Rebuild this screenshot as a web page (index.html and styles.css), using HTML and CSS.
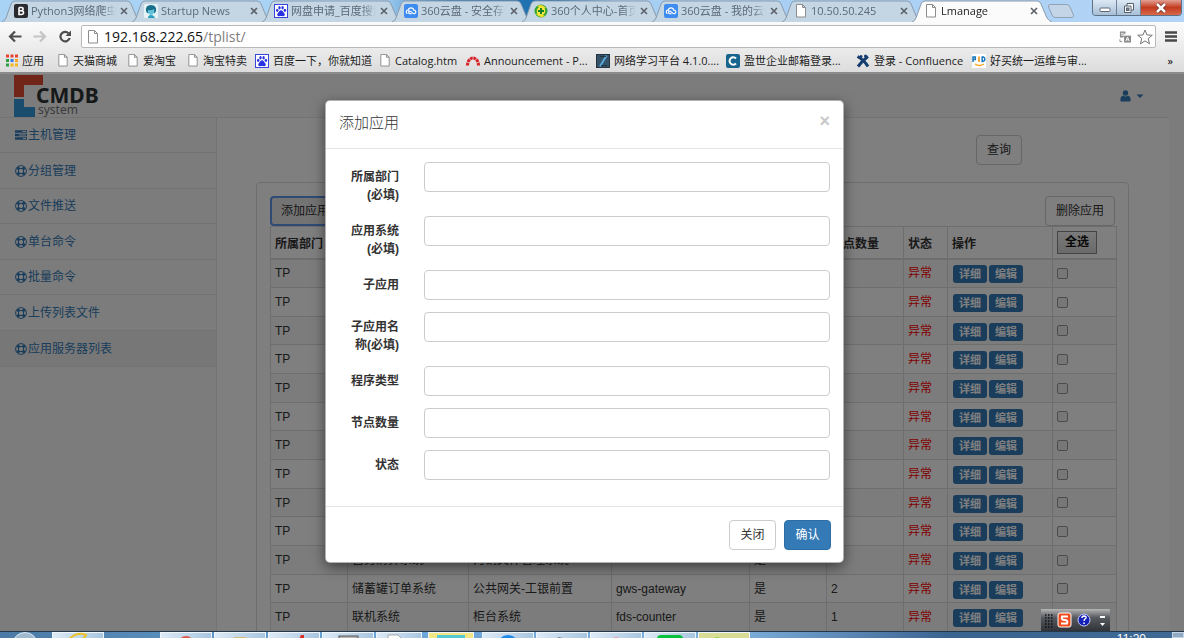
FILE: index.html
```html
<!DOCTYPE html>
<html lang="zh-CN">
<head>
<meta charset="utf-8">
<title>Lmanage</title>
<link rel="stylesheet" href="styles.css">
</head>
<body>
<svg class="defs" aria-hidden="true">
  <symbol id="tab" viewBox="0 0 140 22" preserveAspectRatio="none"><path d="M0 22 Q3 21 4 18 L9 4 Q10 1 13 1 H125 Q128 1 129 4 L135 18 Q137 21 140 22"/></symbol>
  <symbol id="doc" viewBox="0 0 12 14"><path d="M1.500 .5H7.500L10.500 3.500V13H1.500Z M7.500 .5V3.500H10.500" fill="#fff" stroke="#8d8d8d"/></symbol>
  <symbol id="x" viewBox="0 0 8 8"><path d="M1 1L7 7M7 1L1 7" stroke="#5a6169" stroke-width="1.600"/></symbol>
  <symbol id="baidu" viewBox="0 0 14 14"><rect x=".5" y=".5" width="13" height="13" fill="#fff" stroke="#3845dc"/><g fill="#2932e1"><ellipse cx="3.200" cy="6.300" rx="1.200" ry="1.600"/><ellipse cx="5.500" cy="3.800" rx="1.200" ry="1.700"/><ellipse cx="8.600" cy="3.800" rx="1.200" ry="1.700"/><ellipse cx="10.900" cy="6.300" rx="1.200" ry="1.600"/><path d="M7 6.300C8.500 6.300 9 8 10.300 9.300C11.500 11 10.500 12.300 9 12.200C7.500 11.900 6.500 11.900 5 12.200C3.500 12.300 2.500 11 3.700 9.300C5 8 5.500 6.300 7 6.300Z"/></g></symbol>
  <symbol id="cloud" viewBox="0 0 14 14"><rect width="14" height="14" rx="2" fill="#3f8cf0"/><path d="M3.500 9.500C1.500 9 2 5.800 4.200 6.200C5 3 9 3 9.800 6.200C12.300 6 12.500 9.700 10 9.700C8.500 9.700 7.500 7 5.500 7.200C4 7.600 4.500 9.700 6 9.700H7.500" fill="none" stroke="#fff" stroke-width="1.200"/></symbol>
  <symbol id="ring" viewBox="0 0 12 12"><circle cx="6" cy="6" r="5.400" fill="none" stroke="currentColor"/><circle cx="6" cy="6" r="2.700" fill="none" stroke="currentColor"/><path d="M2.200 2.200L4.200 4.200M9.800 2.200L7.800 4.200M2.200 9.800L4.200 7.800M9.800 9.800L7.800 7.800" stroke="currentColor" stroke-width="2.800"/></symbol>
</svg>

<header class="browser">
  <div class="tabstrip">
    <div class="tab"><svg class="tab-shape"><use href="#tab"/></svg>
      <svg class="fav" viewBox="0 0 14 14"><rect width="14" height="14" rx="2" fill="#2b2b2f"/><path d="M5 3.500H7.500Q9.500 3.700 9 5.500Q8.700 6.700 7.500 6.800H5M7.500 6.800Q9.900 7 9.500 9Q9.200 10.500 7.500 10.500H5V3.500" fill="none" stroke="#fff" stroke-width="1.600"/></svg>
      <span class="tab-title">Python3网络爬虫</span><button class="tab-x" aria-label="关闭标签"><svg><use href="#x"/></svg></button></div>
    <div class="tab"><svg class="tab-shape"><use href="#tab"/></svg>
      <svg class="fav" viewBox="0 0 14 14"><rect width="14" height="14" rx="1" fill="#e4f1f5"/><path d="M2 7Q1 1.500 7 1Q13 1.500 12 7L11 9H3Z" fill="#186f8c"/><path d="M4 6Q7 7 10 5Q11.500 10 7 11Q3 10 4 6" fill="#62c2d8"/><path d="M4 14Q4 11 7 11Q10 11 11 14Z" fill="#2b9fc0"/></svg>
      <span class="tab-title">Startup News</span><button class="tab-x" aria-label="关闭标签"><svg><use href="#x"/></svg></button></div>
    <div class="tab"><svg class="tab-shape"><use href="#tab"/></svg><svg class="fav"><use href="#baidu"/></svg>
      <span class="tab-title">网盘申请_百度搜索</span><button class="tab-x" aria-label="关闭标签"><svg><use href="#x"/></svg></button></div>
    <div class="tab"><svg class="tab-shape"><use href="#tab"/></svg><svg class="fav"><use href="#cloud"/></svg>
      <span class="tab-title">360云盘 - 安全存储</span><button class="tab-x" aria-label="关闭标签"><svg><use href="#x"/></svg></button></div>
    <div class="tab"><svg class="tab-shape"><use href="#tab"/></svg>
      <svg class="fav" viewBox="0 0 14 14"><circle cx="7" cy="7" r="6.500" fill="#31a531"/><path d="M3 2Q8 -1 12 4Q9 6 3 2M2 10Q4 8 11 12Q6 15 2 10" fill="#e9df28"/><circle cx="7" cy="7" r="4.300" fill="#f6e742"/><path d="M7 4V10M4 7H10" stroke="#168028" stroke-width="2"/></svg>
      <span class="tab-title">360个人中心-首页</span><button class="tab-x" aria-label="关闭标签"><svg><use href="#x"/></svg></button></div>
    <div class="tab"><svg class="tab-shape"><use href="#tab"/></svg><svg class="fav"><use href="#cloud"/></svg>
      <span class="tab-title">360云盘 - 我的云盘</span><button class="tab-x" aria-label="关闭标签"><svg><use href="#x"/></svg></button></div>
    <div class="tab"><svg class="tab-shape"><use href="#tab"/></svg><svg class="fav"><use href="#doc"/></svg>
      <span class="tab-title">10.50.50.245</span><button class="tab-x" aria-label="关闭标签"><svg><use href="#x"/></svg></button></div>
    <div class="tab active"><svg class="tab-shape"><use href="#tab"/></svg><svg class="fav"><use href="#doc"/></svg>
      <span class="tab-title">Lmanage</span><button class="tab-x" aria-label="关闭标签"><svg><use href="#x"/></svg></button></div>
    <button class="newtab" aria-label="新标签页"><svg viewBox="0 0 28 14"><path d="M3 .5H20Q22 .5 23 3L26.500 11Q27 13 25 13.500H8Q6 13.500 5 11L1.500 3Q1 .5 3 .5Z" fill="#c3d5e6" stroke="#8fa3b8"/></svg></button>
    <div class="winbtns">
      <button aria-label="最小化"><svg viewBox="0 0 12 12"><rect x="1" y="6" width="10" height="3.500" rx="1" fill="#fff" stroke="#5e6a78"/></svg></button>
      <button aria-label="还原"><svg viewBox="0 0 12 12"><path d="M4 1.500H10.500V8H4Z" fill="#fff" stroke="#56606c"/><path d="M1.500 4H8V10.500H1.500Z" fill="#fff" stroke="#56606c"/><rect x="3.500" y="6" width="2.500" height="2.500" fill="#7c8fa5" stroke="#56606c"/></svg></button>
      <button class="win-close" aria-label="关闭"><svg viewBox="0 0 12 12"><path d="M2 2L10 10M10 2L2 10" stroke="#6b2b24" stroke-width="4"/><path d="M2 2L10 10M10 2L2 10" stroke="#fff" stroke-width="2.500"/></svg></button>
    </div>
  </div>

  <div class="toolbar">
    <button class="nav" aria-label="后退"><svg viewBox="0 0 14 12"><path d="M13.500 6H2M7 1L2 6L7 11" fill="none" stroke="#4c4c4c" stroke-width="2.200"/></svg></button>
    <button class="nav" aria-label="前进"><svg viewBox="0 0 14 12"><path d="M.5 6H12M7 1L12 6L7 11" fill="none" stroke="#c4c4c4" stroke-width="2.200"/></svg></button>
    <button class="nav" aria-label="刷新"><svg viewBox="0 0 14 12"><path d="M10.500 2.800A4.700 4.700 0 1 0 11.700 7.500" fill="none" stroke="#4c4c4c" stroke-width="2.200"/><path d="M13 0V5.500H7.500Z" fill="#4c4c4c"/></svg></button>
    <div class="address">
      <svg class="page-icon"><use href="#doc"/></svg>
      <span class="url">192.168.222.65<span>/tplist/</span></span>
      <svg class="translate" viewBox="0 0 13 13"><path d="M1 .5H7V3H5V7H1Z" fill="#888"/><path d="M2 2.500H5M2 4.500H5" stroke="#fff"/><rect x="5.500" y="5" width="7.500" height="7.500" fill="#888"/><path d="M7.500 11L9.200 6.500L11 11M8 9.500H10.500" fill="none" stroke="#fff"/><path d="M1 9V11.500H3.500" fill="none" stroke="#888"/></svg>
      <svg class="star" viewBox="0 0 16 16"><path d="M8 1L10 6L15.300 6.200L11.200 9.600L12.600 14.800L8 11.900L3.400 14.800L4.800 9.600L.7 6.200L6 6Z" fill="#fff" stroke="#777"/></svg>
    </div>
    <button class="nav menu" aria-label="菜单"><svg viewBox="0 0 12 12"><path d="M0 2H12M0 6H12M0 10H12" stroke="#484848" stroke-width="2.400"/></svg></button>
  </div>

  <nav class="bookmarks">
    <a href="#"><svg class="bm" viewBox="0 0 12 12"><path d="M0 1.500H12" stroke="#e8432f" stroke-width="3" stroke-dasharray="3 1.500"/><path d="M0 6H3" stroke="#2a9d46" stroke-width="3"/><path d="M4.500 6H7.500" stroke="#3b78e7" stroke-width="3"/><path d="M9 6H12" stroke="#f5a81c" stroke-width="3"/><path d="M0 10.500H3" stroke="#2a9d46" stroke-width="3"/><path d="M4.500 10.500H12" stroke="#f5b81c" stroke-width="3" stroke-dasharray="3 1.500"/></svg>应用</a>
    <a href="#"><svg class="bm"><use href="#doc"/></svg>天猫商城</a>
    <a href="#"><svg class="bm"><use href="#doc"/></svg>爱淘宝</a>
    <a href="#"><svg class="bm"><use href="#doc"/></svg>淘宝特卖</a>
    <a href="#"><svg class="bm wide"><use href="#baidu"/></svg>百度一下，你就知道</a>
    <a href="#"><svg class="bm"><use href="#doc"/></svg>Catalog.htm</a>
    <a href="#"><svg class="bm wide" viewBox="0 0 14 14"><path d="M1.500 11.500A5.500 7.500 0 0 1 12.500 11.500" fill="none" stroke="#d81f26" stroke-width="3" stroke-dasharray="2.800 .7"/></svg>Announcement - P...</a>
    <a href="#"><svg class="bm wide" viewBox="0 0 14 14"><rect width="14" height="14" fill="#26323e"/><path d="M1 1H13V13H1Z" fill="#34536b"/><path d="M10.500 1.500L4 12.500" fill="none" stroke="#58a7d8" stroke-width="2"/><path d="M4 2.500H10M5 11.500H11" stroke="#22323f"/></svg>网络学习平台 4.1.0....</a>
    <a href="#"><svg class="bm wide" viewBox="0 0 14 14"><rect width="14" height="14" rx="2" fill="#17658d"/><path d="M10 4.500A3.700 3.700 0 1 0 10 9.500" fill="none" stroke="#fff" stroke-width="2"/></svg>盈世企业邮箱登录...</a>
    <a href="#"><svg class="bm wide" viewBox="0 0 14 14"><path d="M1.500 2.500Q8 6 12 12.500M12 2.500Q7 6 2 12.500" fill="none" stroke="#143c6e" stroke-width="3"/><circle cx="5" cy="2.500" r="1.500" fill="#143c6e"/><circle cx="9.500" cy="2" r="1.500" fill="#143c6e"/></svg>登录 - Confluence</a>
    <a href="#"><svg class="bm wide" viewBox="0 0 14 14"><rect width="14" height="14" fill="#fff"/><path d="M1 8V3H3.300V5.500H1" fill="none" stroke="#1677bd" stroke-width="1.500"/><path d="M7 2.500V8" stroke="#f39c1e" stroke-width="1.700"/><path d="M10.200 3H11.500Q13 3.500 12.800 5.500Q12.500 7.500 10.200 7.500Z" fill="none" stroke="#1677bd" stroke-width="1.500"/><path d="M3 10Q7 13 12 10" fill="none" stroke="#f5a623" stroke-width="1.300"/></svg>好买统一运维与审...</a>
    <button class="more" aria-label="更多书签">»</button>
  </nav>
</header>

<div class="viewport">
  <div class="page">
    <header class="site-head">
      <svg class="logo" viewBox="0 0 86 43" role="img" aria-label="CMDB system">
        <path d="M0 1H29V11H10V23H0Z" fill="#e04b30"/><path d="M0 25H10V33H21V43H0Z" fill="#3498db"/>
        <text class="logo-main" x="22" y="29">CMDB</text><text class="logo-sub" x="24" y="40">system</text>
      </svg>
      <button class="user" aria-label="用户菜单"><svg viewBox="0 0 24 12"><circle cx="5.500" cy="3" r="2.700" fill="#337ab7"/><path d="M.5 11.500V8Q1 6 3 5.500Q5.500 7.500 8 5.500Q10 6 10.500 8V11.500Z" fill="#337ab7"/><path d="M16.500 4.500H23.500L20 8Z" fill="#337ab7"/></svg></button>
    </header>
    <div class="columns">
      <nav class="sidebar">
        <a href="#"><svg class="ico" viewBox="0 0 12 12"><path d="M0 2.500H12M0 6H12M0 9.500H12" stroke="currentColor" stroke-width="2.700"/><path d="M7.500 2.500H11M4 6H11M8 9.500H11" stroke="#f8f8f8"/></svg>主机管理</a>
        <a href="#"><svg class="ico"><use href="#ring"/></svg>分组管理</a>
        <a href="#"><svg class="ico"><use href="#ring"/></svg>文件推送</a>
        <a href="#"><svg class="ico"><use href="#ring"/></svg>单台命令</a>
        <a href="#"><svg class="ico"><use href="#ring"/></svg>批量命令</a>
        <a href="#"><svg class="ico"><use href="#ring"/></svg>上传列表文件</a>
        <a href="#" class="current"><svg class="ico"><use href="#ring"/></svg>应用服务器列表</a>
      </nav>
      <main class="main">
        <div class="search"><button class="btn">查询</button></div>
        <section class="panel">
          <div class="actions"><button class="btn focused">添加应用</button><button class="btn">删除应用</button></div>
          <table class="grid">
            <colgroup><col class="c-dept"><col class="c-sys"><col class="c-sub"><col class="c-name"><col class="c-type"><col class="c-count"><col class="c-state"><col class="c-ops"><col class="c-check"></colgroup>
            <thead><tr><th>所属部门</th><th>应用系统</th><th>子应用</th><th>子应用名称</th><th>程序类型</th><th>节点数量</th><th>状态</th><th>操作</th><th><button class="all">全选</button></th></tr></thead>
            <tbody>
            <tr><td>TP</td><td></td><td></td><td></td><td></td><td></td><td class="bad">异常</td><td><a class="tag" href="#">详细</a><a class="tag" href="#">编辑</a></td><td><input type="checkbox" aria-label="选择"></td></tr>
            <tr><td>TP</td><td></td><td></td><td></td><td></td><td></td><td class="bad">异常</td><td><a class="tag" href="#">详细</a><a class="tag" href="#">编辑</a></td><td><input type="checkbox" aria-label="选择"></td></tr>
            <tr><td>TP</td><td></td><td></td><td></td><td></td><td></td><td class="bad">异常</td><td><a class="tag" href="#">详细</a><a class="tag" href="#">编辑</a></td><td><input type="checkbox" aria-label="选择"></td></tr>
            <tr><td>TP</td><td></td><td></td><td></td><td></td><td></td><td class="bad">异常</td><td><a class="tag" href="#">详细</a><a class="tag" href="#">编辑</a></td><td><input type="checkbox" aria-label="选择"></td></tr>
            <tr><td>TP</td><td></td><td></td><td></td><td></td><td></td><td class="bad">异常</td><td><a class="tag" href="#">详细</a><a class="tag" href="#">编辑</a></td><td><input type="checkbox" aria-label="选择"></td></tr>
            <tr><td>TP</td><td></td><td></td><td></td><td></td><td></td><td class="bad">异常</td><td><a class="tag" href="#">详细</a><a class="tag" href="#">编辑</a></td><td><input type="checkbox" aria-label="选择"></td></tr>
            <tr><td>TP</td><td></td><td></td><td></td><td></td><td></td><td class="bad">异常</td><td><a class="tag" href="#">详细</a><a class="tag" href="#">编辑</a></td><td><input type="checkbox" aria-label="选择"></td></tr>
            <tr><td>TP</td><td></td><td></td><td></td><td></td><td></td><td class="bad">异常</td><td><a class="tag" href="#">详细</a><a class="tag" href="#">编辑</a></td><td><input type="checkbox" aria-label="选择"></td></tr>
            <tr><td>TP</td><td></td><td></td><td></td><td></td><td></td><td class="bad">异常</td><td><a class="tag" href="#">详细</a><a class="tag" href="#">编辑</a></td><td><input type="checkbox" aria-label="选择"></td></tr>
            <tr><td>TP</td><td></td><td></td><td></td><td></td><td></td><td class="bad">异常</td><td><a class="tag" href="#">详细</a><a class="tag" href="#">编辑</a></td><td><input type="checkbox" aria-label="选择"></td></tr>
            <tr><td>TP</td><td>营务清算系统</td><td>对销文件管理系统</td><td></td><td>是</td><td></td><td class="bad">异常</td><td><a class="tag" href="#">详细</a><a class="tag" href="#">编辑</a></td><td><input type="checkbox" aria-label="选择"></td></tr>
            <tr><td>TP</td><td>储蓄罐订单系统</td><td>公共网关-工银前置</td><td>gws-gateway</td><td>是</td><td>2</td><td class="bad">异常</td><td><a class="tag" href="#">详细</a><a class="tag" href="#">编辑</a></td><td><input type="checkbox" aria-label="选择"></td></tr>
            <tr><td>TP</td><td>联机系统</td><td>柜台系统</td><td>fds-counter</td><td>是</td><td>1</td><td class="bad">异常</td><td><a class="tag" href="#">详细</a><a class="tag" href="#">编辑</a></td><td><input type="checkbox" aria-label="选择"></td></tr>
            </tbody>
          </table>
        </section>
      </main>
    </div>
  </div>

  <div class="backdrop">
    <div class="modal" role="dialog" aria-labelledby="dlg-title">
      <div class="modal-head"><h4 id="dlg-title">添加应用</h4><button class="close" aria-label="关闭">×</button></div>
      <form class="modal-body">
        <div class="field"><label for="f1">所属部门(必填)</label><input id="f1" type="text"></div>
        <div class="field"><label for="f2">应用系统(必填)</label><input id="f2" type="text"></div>
        <div class="field"><label for="f3">子应用</label><input id="f3" type="text"></div>
        <div class="field"><label for="f4">子应用名称(必填)</label><input id="f4" type="text"></div>
        <div class="field"><label for="f5">程序类型</label><input id="f5" type="text"></div>
        <div class="field"><label for="f6">节点数量</label><input id="f6" type="text"></div>
        <div class="field"><label for="f7">状态</label><input id="f7" type="text"></div>
      </form>
      <div class="modal-foot"><button class="btn">关闭</button><button class="btn primary">确认</button></div>
    </div>
  </div>

  <div class="ime">
    <svg viewBox="0 0 69 22"><path d="M4 6H12M4 9H12M4 12H12M4 15H12M4 18H12" stroke="#111" stroke-width="1.500" stroke-dasharray="1.500 1.500"/><rect x="17" y="4" width="13" height="14" rx="2" fill="#ef4a1c" stroke="#fff"/><path d="M27 7.500H21Q20 11 23.500 11Q27.500 11 26 14.500H20" fill="none" stroke="#fff" stroke-width="2"/><circle cx="43" cy="11" r="6" fill="#1420b8" stroke="#c9cff5"/><path d="M41 9Q41 7 43 7Q45.500 7.200 45 9Q43 10.500 43 12M43 13.500V15" fill="none" stroke="#fff" stroke-width="1.500"/><path d="M59 8H64" stroke="#fff" stroke-width="2"/><path d="M59 14H64L61.500 17Z" fill="#fff"/></svg>
  </div>
</div>

<footer class="taskbar">
  <span class="start"><svg viewBox="0 0 28 7"><circle cx="14" cy="14" r="12.500" fill="#9fb9cf" stroke="#dbe9f4"/></svg></span>
  <span class="task"><svg viewBox="0 0 28 7"><path d="M5 7Q14 -1 22 3Q21 6 17 7" fill="none" stroke="#eac12c" stroke-width="2"/></svg></span>
  <span class="task flat"></span>
  <span class="task"><svg viewBox="0 0 28 7"><circle cx="14" cy="12" r="8" fill="#dc5a4a"/></svg></span>
  <span class="task"><svg viewBox="0 0 28 7"><rect x="8" y="5" width="12" height="4" fill="#d8bd7a"/></svg></span>
  <span class="task"><svg viewBox="0 0 28 7"><path d="M19 7L21 3H24V7Z" fill="#d93025"/></svg></span>
  <span class="task"><svg viewBox="0 0 28 7"><rect x="5" y="4" width="19" height="6" fill="#b5b5b5" stroke="#555"/></svg></span>
  <span class="task narrow"><svg viewBox="0 0 28 7"><path d="M3 3H13L17 7H3Z" fill="#fff" stroke="#aaa"/></svg></span>
  <span class="task narrow yellow"><svg viewBox="0 0 28 7"><rect y="3" width="28" height="4" fill="#55c9d2"/></svg></span>
  <span class="task"><svg viewBox="0 0 28 7"><circle cx="14" cy="14" r="11" fill="#1d8ae6"/></svg></span>
  <span class="task"><svg viewBox="0 0 28 7"><path d="M10 5L20 7H10Z" fill="#777"/></svg></span>
  <span class="task"><svg viewBox="0 0 28 7"><circle cx="14" cy="9" r="4" fill="#e7a6a6"/></svg></span>
  <span class="task"><svg viewBox="0 0 28 7"><rect x="1" y="3" width="26" height="9" rx="4" fill="#07c23b"/></svg></span>
  <span class="task olive"><svg viewBox="0 0 28 7"><circle cx="7" cy="10" r="5" fill="#8dd63c"/></svg></span>
  <span class="clock">11:20</span>
  <span class="desk"></span>
</footer>
</body>
</html>
```
FILE: styles.css
```css
* { box-sizing: border-box; }
html, body { height: 100%; }
body {
  margin: 0;
  display: flex;
  flex-direction: column;
  overflow: hidden;
  font: 12px/18px "Liberation Sans", "Noto Sans CJK SC", sans-serif;
  color: #333;
}
button, input { font: inherit; margin: 0; }
button { cursor: pointer; }
a { text-decoration: none; }
svg { display: block; flex: none; }
.defs { position: absolute; width: 0; height: 0; }

/* browser chrome */
.browser { flex: none; font: 11px/16px "Open Sans", "Noto Sans CJK SC", sans-serif; }
.browser button { border: 0; background: none; padding: 0; }
.tabstrip {
  display: flex;
  height: 22px;
  padding-left: 2px;
  background: linear-gradient(90deg, #a9d3f5 0, #a9d3f5 32%, #2a78b8 38%, #1b6fae 47%, #a5cef3 52%, #b2d4f6 100%);
}
.tab {
  position: relative;
  display: flex;
  align-items: center;
  flex: none;
  width: 140px;
  height: 22px;
  margin-right: -10px;
  padding: 0 14px 0 12px;
  color: #5d6a76;
}
.tab-shape { position: absolute; inset: 0; width: 100%; height: 100%; fill: #c4d5e4; stroke: #8a9bad; }
.active { z-index: 1; color: #222; }
.active .tab-shape { fill: #fbfbfb; }
.fav { position: relative; width: 14px; height: 14px; margin-right: 3px; }
.tab-title {
  position: relative;
  flex: 1;
  min-width: 0;
  overflow: hidden;
  white-space: nowrap;
  margin-right: 4px;
  mask-image: linear-gradient(90deg, #000 84%, transparent);
}
.tab-x { position: relative; }
.tab-x svg { width: 8px; height: 8px; }
.newtab { margin-left: 5px; }
.newtab svg { width: 28px; height: 14px; }
.winbtns { display: flex; height: 16px; margin-left: auto; margin-right: 2px; border: 1px solid #5d7287; border-top: 0; border-radius: 0 0 4px 4px; overflow: hidden; }
.winbtns button { display: grid; place-items: center; width: 24px; background: linear-gradient(#dce8f4, #a8bfd6); border-right: 1px solid #6d8299; }
.winbtns .win-close { width: 40px; border: 0; background: linear-gradient(#e3a093, #c23b20 50%, #d9694d); }
.winbtns svg { width: 12px; height: 12px; }
.toolbar { display: flex; align-items: center; height: 27px; padding: 2px 7px 0 8px; gap: 11px; background: linear-gradient(#fbfbfb, #ebebeb); }
.nav svg { width: 14px; height: 13px; }
.menu svg { width: 12px; }
.address { flex: 1; display: flex; align-items: center; height: 23px; margin: 0 -2px; padding: 0 2px 0 5px; background: #fff; border: 1px solid #b9b9b9; border-radius: 2px; }
.page-icon { width: 12px; height: 14px; }
.url { flex: 1; margin-left: 5px; font-size: 14px; line-height: 20px; color: #111; }
.url span { color: #808080; }
.translate { width: 12px; height: 12px; margin-right: 6px; }
.star { width: 16px; height: 16px; }
.bookmarks {
  display: grid;
  grid-template-columns: 51px 70px 60px 68px 124px 87px 130px 130px 130px 116px 1fr auto;
  align-items: center;
  height: 25px;
  padding: 0 11px 0 6px;
  border-bottom: 2px solid #8c8c8c;
  background: linear-gradient(#ebebeb, #dcdcdc);
}
.bookmarks a { display: flex; align-items: center; gap: 4px; color: #1c1c1c; white-space: nowrap; }
.bm { width: 12px; height: 13px; }
.bm.wide { width: 14px; height: 14px; }

/* page */
.viewport { position: relative; flex: 1; min-height: 0; overflow: hidden; background: #f8f8f8; }
.page { height: 100%; display: flex; flex-direction: column; margin-right: 15px; }
.site-head { display: flex; flex: none; justify-content: space-between; align-items: center; height: 44px; padding: 0 25px 0 14px; border-bottom: 1px solid #e7e7e7; }
.logo { width: 86px; height: 43px; }
.logo-main { font: bold 21px "Noto Sans", sans-serif; fill: #2c3333; }
.logo-sub { font: 12px "Noto Sans", sans-serif; fill: #777; }
.user { border: 0; background: none; padding: 0; }
.user svg { width: 24px; height: 12px; }
.columns { flex: 1; min-height: 0; display: flex; }
.sidebar { flex: none; width: 216px; }
.sidebar a { display: flex; align-items: center; height: 36px; padding-left: 15px; gap: 1px; border-bottom: 1px solid #e7e7e7; color: #337ab7; }
.sidebar a:nth-child(odd) { height: 35px; }
.sidebar a.current { height: 36px; background: #eee; }
.ico { width: 12px; height: 12px; }
.main { flex: 1; min-width: 0; padding: 17px 40px 0 39px; background: #fff; border-left: 1px solid #e7e7e7; }
.search { display: flex; justify-content: flex-end; padding-right: 107px; margin-bottom: 17px; }
.btn { height: 30px; padding: 0 10px; border: 1px solid #ccc; border-radius: 4px; background: #fff; color: #333; }
.btn.focused { background: #e6e6e6; border: 2px solid #5f95e8; padding: 0 9px; }
.btn.primary { background: #337ab7; border-color: #2e6da4; color: #fff; }
.panel { padding: 13px; border: 1px solid #ddd; border-radius: 4px; }
.actions { display: flex; justify-content: space-between; }
.grid { width: 100%; table-layout: fixed; border-collapse: collapse; }
.c-dept, .c-count, .c-type { width: 77px; }
.c-sys { width: 121px; }
.c-sub { width: 143px; }
.c-name { width: 138px; }
.c-state { width: 44px; }
.c-ops { width: 105px; }
.c-check { width: 64px; }
.grid th, .grid td { border: 1px solid #ddd; padding: 0 4px; text-align: left; white-space: nowrap; overflow: hidden; }
.grid thead tr { height: 32px; }
.grid th { padding-top: 4px; border-bottom-width: 2px; }
.grid th:last-child { padding-top: 0; }
.grid tbody tr { height: 29px; }
.grid tbody tr:nth-child(3n) { height: 28px; }
.grid tbody tr:nth-child(odd) { background: #f9f9f9; }
.grid .bad { color: #f00; }
.all { display: block; width: 40px; height: 23px; padding: 0; border: 1px solid #888; background: linear-gradient(#f5f5f5, #d5d5d5); color: #111; font-weight: bold; }
.tag { display: inline-block; width: 34px; height: 18px; margin: 2px 2px 0 1px; border-radius: 3px; background: #337ab7; color: #fff; font-size: 11px; font-weight: bold; line-height: 18px; text-align: center; vertical-align: middle; }
.tag + .tag { margin-left: 0; }
.grid input { display: block; appearance: none; width: 11px; height: 11px; border: 1px solid #999; border-radius: 2px; background: #eee; }

/* dialog */
.backdrop { position: absolute; inset: 0; padding: 26px 15px 0 0; background: rgba(0, 0, 0, .5); }
.modal { max-width: 519px; margin: 0 auto; background: #fff; border: 1px solid rgba(0, 0, 0, .3); border-radius: 5px; box-shadow: 0 4px 13px rgba(0, 0, 0, .5); }
.modal-head { display: flex; justify-content: space-between; height: 48px; padding: 12px 13px; border-bottom: 1px solid #e5e5e5; }
.modal-head h4 { margin: 0; font-size: 15px; font-weight: 300; line-height: 20px; }
.close { border: 0; background: none; padding: 0; height: 16px; font-size: 18px; font-weight: bold; line-height: 16px; color: #c8c8c8; }
.modal-body { display: flex; flex-direction: column; gap: 12px; padding: 13px 13px 26px; }
.field { display: grid; grid-template-columns: 60px 1fr; column-gap: 25px; align-items: start; }
.field label { padding: 6px 0 0 6px; font-weight: bold; text-align: right; }
.field input { width: 100%; height: 30px; padding: 0 10px; border: 1px solid #ccc; border-radius: 4px; background: #fff; }
.modal-foot { display: flex; justify-content: flex-end; gap: 8px; padding: 13px 12px 12px; border-top: 1px solid #e5e5e5; }
.modal-foot .btn { width: 47px; }

/* input method bar and taskbar */
.ime { position: absolute; right: 74px; bottom: 0; width: 69px; height: 22px; background: linear-gradient(#b5b5b5, #55585c 40%, #303338); }
.taskbar { flex: none; display: flex; gap: 2px; height: 7px; overflow: hidden; border-top: 1px solid #24384c; background: linear-gradient(90deg, #4a7aa5, #6aa3d6 30%, #7fb0dc 62%, #3a6390 80%, #3f6a96); }
.start { width: 50px; }
.task { width: 52px; background: linear-gradient(90deg, #dceaf6, #a9c6e0); border: 1px solid #eef6fc; border-bottom: 0; }
.task.flat { background: none; border: 0; }
.task.narrow { width: 46px; }
.task.yellow { margin: 0 6px 0 4px; background: #f3e684; }
.task.olive { background: #d9dc94; }
.start svg, .task svg { width: 28px; height: 7px; margin: -1px auto 0; }
.clock { margin-left: auto; margin-right: 24px; color: #fff; font-size: 12px; line-height: 14px; }
.desk { width: 12px; background: #8ea9c4; border: 1px solid #c5d5e4; }
```
